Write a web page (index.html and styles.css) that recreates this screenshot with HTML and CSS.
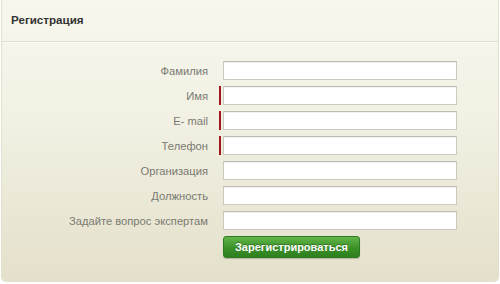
FILE: index.html
```html
<!DOCTYPE html>
<html lang="ru">

<head>
    <meta charset="UTF-8" />
    <meta name="viewport" content="width=device-width, initial-scale=1.0" />
    <title>Регистрация</title>
    <link rel="stylesheet" href="styles.css">
</head>

<body>
    <div class="panel">
        <div class="panel-head">Регистрация</div>

        <form class="reg-form" action="#">
            <div class="row">
                <label class="row-label">Фамилия</label>
                <div class="field">
                    <input type="text" />
                </div>
            </div>
            <div class="row">
                <label class="row-label">Имя</label>
                <div class="field required">
                    <input type="text" />
                </div>
            </div>
            <div class="row">
                <label class="row-label">E- mail</label>
                <div class="field required">
                    <input type="text" />
                </div>
            </div>
            <div class="row">
                <label class="row-label">Телефон</label>
                <div class="field required">
                    <input type="text" />
                </div>
            </div>
            <div class="row">
                <label class="row-label">Организация</label>
                <div class="field">
                    <input type="text" />
                </div>
            </div>
            <div class="row">
                <label class="row-label">Должность</label>
                <div class="field">
                    <input type="text" />
                </div>
            </div>
            <div class="row">
                <label class="row-label">Задайте вопрос экспертам</label>
                <div class="field">
                    <input type="text" />
                </div>
            </div>

            <div class="row">
                <span class="row-label"></span>
                <div class="field">
                    <button type="submit" class="btn-green">Зарегистрироваться</button>
                </div>
            </div>
        </form>
    </div>
</body>

</html>
```

FILE: styles.css
```css
* {
    margin: 0;
    padding: 0;
    box-sizing: border-box;
}

body {
    font-family: "Liberation Sans", Arial, sans-serif;
    background: #fff;
    padding: 0 1px 0 1px;
}

.panel {
    width: 498px;
    height: 282px;
    border: 1px solid #e3e0cc;
    border-top: none;
    border-radius: 0 0 5px 5px;
    background: linear-gradient(#f7f7ed, #f2f1e4 40%, #e4e0cb);
}

.panel-head {
    height: 42px;
    padding: 13px 0 0 9px;
    font-size: 11.6px;
    font-weight: bold;
    color: #333;
    border-bottom: 1px solid #e0dece;
    box-shadow: 0 1px 0 #fbfbf4;
}

.reg-form {
    padding-top: 19px;
}

.row {
    display: flex;
    align-items: center;
    margin-bottom: 6px;
}

.row:nth-child(5) {
    margin-top: 1px;
}

.row:last-child {
    margin-top: 1px;
}

.row-label {
    width: 206px;
    text-align: right;
    font-size: 11.2px;
    color: #7a7a72;
}

/* 
    красная полоска у обязательных полей
*/
.field {
    margin-left: 11px;
    padding-left: 2px;
    border-left: 2px solid transparent;
}

.field.required {
    border-left-color: #a0171c;
}

.field input {
    display: block;
    width: 234px;
    height: 19px;
    border: 1px solid #cbcac0;
    border-top-color: #bdbcb2;
    background: #fff;
    box-shadow: inset 0 1px 1px rgba(0, 0, 0, 0.06);
}

.btn-green {
    display: block;
    width: 137px;
    height: 22px;
    border: 1px solid #2d7a22;
    border-radius: 3px;
    background: linear-gradient(#62b548, #3b9229 55%, #2e7f1f);
    color: #fff;
    font-family: "Liberation Sans", Arial, sans-serif;
    font-size: 11px;
    font-weight: bold;
    text-shadow: 0 -1px 0 rgba(0, 0, 0, 0.3);
    box-shadow: 0 1px 1px rgba(0, 0, 0, 0.2);
    cursor: pointer;
}
```
